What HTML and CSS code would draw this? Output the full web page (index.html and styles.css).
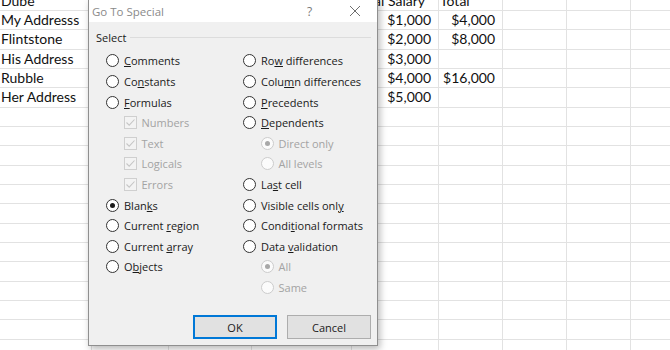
FILE: index.html
```html
<!DOCTYPE html>
<html>
<head>
<meta charset="utf-8">
<link rel="stylesheet" href="styles.css">
</head>
<body>
<div class="sheet">
  <div class="c t">Dube</div><div class="c"></div><div class="c"></div><div class="c"></div><div class="c n hd">Annual Salary</div><div class="c t">Total</div><div class="c"></div><div class="c"></div><div class="c"></div><div class="c"></div>
  <div class="c t">My Addresss</div><div class="c"></div><div class="c"></div><div class="c"></div><div class="c n">$1,000</div><div class="c n">$4,000</div><div class="c"></div><div class="c"></div><div class="c"></div><div class="c"></div>
  <div class="c t">Flintstone</div><div class="c"></div><div class="c"></div><div class="c"></div><div class="c n">$2,000</div><div class="c n">$8,000</div><div class="c"></div><div class="c"></div><div class="c"></div><div class="c"></div>
  <div class="c t">His Address</div><div class="c"></div><div class="c"></div><div class="c"></div><div class="c n">$3,000</div><div class="c n"></div><div class="c"></div><div class="c"></div><div class="c"></div><div class="c"></div>
  <div class="c t">Rubble</div><div class="c"></div><div class="c"></div><div class="c"></div><div class="c n">$4,000</div><div class="c n">$16,000</div><div class="c"></div><div class="c"></div><div class="c"></div><div class="c"></div>
  <div class="c t">Her Address</div><div class="c"></div><div class="c"></div><div class="c"></div><div class="c n">$5,000</div><div class="c n"></div><div class="c"></div><div class="c"></div><div class="c"></div><div class="c"></div>
  <div class="c"></div><div class="c"></div><div class="c"></div><div class="c"></div><div class="c"></div><div class="c"></div><div class="c"></div><div class="c"></div><div class="c"></div><div class="c"></div>
  <div class="c"></div><div class="c"></div><div class="c"></div><div class="c"></div><div class="c"></div><div class="c"></div><div class="c"></div><div class="c"></div><div class="c"></div><div class="c"></div>
  <div class="c"></div><div class="c"></div><div class="c"></div><div class="c"></div><div class="c"></div><div class="c"></div><div class="c"></div><div class="c"></div><div class="c"></div><div class="c"></div>
  <div class="c"></div><div class="c"></div><div class="c"></div><div class="c"></div><div class="c"></div><div class="c"></div><div class="c"></div><div class="c"></div><div class="c"></div><div class="c"></div>
  <div class="c"></div><div class="c"></div><div class="c"></div><div class="c"></div><div class="c"></div><div class="c"></div><div class="c"></div><div class="c"></div><div class="c"></div><div class="c"></div>
  <div class="c"></div><div class="c"></div><div class="c"></div><div class="c"></div><div class="c"></div><div class="c"></div><div class="c"></div><div class="c"></div><div class="c"></div><div class="c"></div>
  <div class="c"></div><div class="c"></div><div class="c"></div><div class="c"></div><div class="c"></div><div class="c"></div><div class="c"></div><div class="c"></div><div class="c"></div><div class="c"></div>
  <div class="c"></div><div class="c"></div><div class="c"></div><div class="c"></div><div class="c"></div><div class="c"></div><div class="c"></div><div class="c"></div><div class="c"></div><div class="c"></div>
  <div class="c"></div><div class="c"></div><div class="c"></div><div class="c"></div><div class="c"></div><div class="c"></div><div class="c"></div><div class="c"></div><div class="c"></div><div class="c"></div>
  <div class="c"></div><div class="c"></div><div class="c"></div><div class="c"></div><div class="c"></div><div class="c"></div><div class="c"></div><div class="c"></div><div class="c"></div><div class="c"></div>
  <div class="c"></div><div class="c"></div><div class="c"></div><div class="c"></div><div class="c"></div><div class="c"></div><div class="c"></div><div class="c"></div><div class="c"></div><div class="c"></div>
  <div class="c"></div><div class="c"></div><div class="c"></div><div class="c"></div><div class="c"></div><div class="c"></div><div class="c"></div><div class="c"></div><div class="c"></div><div class="c"></div>
  <div class="c"></div><div class="c"></div><div class="c"></div><div class="c"></div><div class="c"></div><div class="c"></div><div class="c"></div><div class="c"></div><div class="c"></div><div class="c"></div>
</div>

<div class="dialog">
  <div class="titlebar">
    <span class="title">Go To Special</span>
    <span class="help">?</span>
    <span class="close"><svg width="12" height="12" viewBox="0 0 12 12"><path d="M1 1 L11 11 M11 1 L1 11" stroke="#6e6e6e" stroke-width="1" fill="none"/></svg></span>
  </div>
  <div class="dlg-body">
    <div class="group">
      <div class="group-head"><span class="legend">Select</span><span class="rule"></span></div>
      <div class="cols">
        <div class="col left">
          <div class="opt"><span class="radio"></span><span><u>C</u>omments</span></div>
          <div class="opt"><span class="radio"></span><span>Co<u>n</u>stants</span></div>
          <div class="opt"><span class="radio"></span><span><u>F</u>ormulas</span></div>
          <div class="opt sub dis"><span class="check"><svg width="13" height="13" viewBox="0 0 13 13"><path d="M2.5 6.5 L5.2 9.2 L10.5 3.5" stroke="#c6c6c6" stroke-width="1.1" fill="none"/></svg></span><span>Numbers</span></div>
          <div class="opt sub dis"><span class="check"><svg width="13" height="13" viewBox="0 0 13 13"><path d="M2.5 6.5 L5.2 9.2 L10.5 3.5" stroke="#c6c6c6" stroke-width="1.1" fill="none"/></svg></span><span>Text</span></div>
          <div class="opt sub dis"><span class="check"><svg width="13" height="13" viewBox="0 0 13 13"><path d="M2.5 6.5 L5.2 9.2 L10.5 3.5" stroke="#c6c6c6" stroke-width="1.1" fill="none"/></svg></span><span>Logicals</span></div>
          <div class="opt sub dis"><span class="check"><svg width="13" height="13" viewBox="0 0 13 13"><path d="M2.5 6.5 L5.2 9.2 L10.5 3.5" stroke="#c6c6c6" stroke-width="1.1" fill="none"/></svg></span><span>Errors</span></div>
          <div class="opt on"><span class="radio"></span><span>Blan<u>k</u>s</span></div>
          <div class="opt"><span class="radio"></span><span>Current <u>r</u>egion</span></div>
          <div class="opt"><span class="radio"></span><span>Current <u>a</u>rray</span></div>
          <div class="opt"><span class="radio"></span><span>O<u>b</u>jects</span></div>
        </div>
        <div class="col right">
          <div class="opt"><span class="radio"></span><span>Ro<u>w</u> differences</span></div>
          <div class="opt"><span class="radio"></span><span>Colu<u>m</u>n differences</span></div>
          <div class="opt"><span class="radio"></span><span><u>P</u>recedents</span></div>
          <div class="opt"><span class="radio"></span><span><u>D</u>ependents</span></div>
          <div class="opt sub dis on"><span class="radio"></span><span>Direct only</span></div>
          <div class="opt sub dis"><span class="radio"></span><span>All levels</span></div>
          <div class="opt"><span class="radio"></span><span>La<u>s</u>t cell</span></div>
          <div class="opt"><span class="radio"></span><span>Visible cells onl<u>y</u></span></div>
          <div class="opt"><span class="radio"></span><span>Condi<u>t</u>ional formats</span></div>
          <div class="opt"><span class="radio"></span><span>Data <u>v</u>alidation</span></div>
          <div class="opt sub dis on"><span class="radio"></span><span>All</span></div>
          <div class="opt sub dis"><span class="radio"></span><span>Same</span></div>
        </div>
      </div>
    </div>
    <div class="buttons">
      <button class="btn default">OK</button>
      <button class="btn">Cancel</button>
    </div>
  </div>
</div>
</body>
</html>
```

FILE: styles.css
```css
html, body {
  margin: 0;
  padding: 0;
  background: #ffffff;
  overflow: hidden;
  width: 670px;
  height: 350px;
}

body {
  position: relative;
  font-family: Lato, "Liberation Sans", sans-serif;
}

.sheet {
  display: grid;
  grid-template-columns: 92px 77px 83px 100px 87px 64px 64px 64px 64px 64px;
  grid-auto-rows: 19.33px;
  margin-top: -8.33px;
  width: 759px;
}

.c {
  box-sizing: border-box;
  border-right: 1px solid #e2e2e2;
  border-bottom: 1px solid #e2e2e2;
  font-size: 14px;
  line-height: 18px;
  color: #111111;
  white-space: nowrap;
  overflow: visible;
  padding: 0 2px;
  min-width: 0;
}

.c.t { text-align: left; padding-left: 1px; }
.c.n { text-align: right; padding-right: 7px; }
.c.hd {
  display: flex;
  justify-content: flex-end;
  padding-right: 13px;
}

/* Dialog */
.dialog {
  position: absolute;
  left: 88px;
  top: -1px;
  width: 290px;
  height: 347px;
  box-sizing: border-box;
  border: 1px solid #8f8f8f;
  background: #f0f0f0;
  box-shadow: 2px 3px 7px rgba(0, 0, 0, 0.28);
  display: flex;
  flex-direction: column;
  font-family: "Open Sans", "Noto Sans", sans-serif;
}

.titlebar {
  height: 22px;
  background: #ffffff;
  display: flex;
  align-items: center;
  flex: none;
}

.title {
  font-size: 11.5px;
  color: #8a8a8a;
  padding-left: 3px;
  flex: 1;
}

.help {
  font-size: 12px;
  color: #7a7a7a;
  width: 12px;
  margin-right: 30px;
}

.close {
  width: 12px;
  height: 12px;
  margin-right: 16px;
  display: flex;
}

.dlg-body {
  flex: 1;
  display: flex;
  flex-direction: column;
  padding: 0 6px 6px 0;
}

.group-head {
  display: flex;
  align-items: center;
  margin-top: 7px;
  height: 17px;
  padding-left: 7px;
}

.legend {
  font-size: 11px;
  color: #1a1a1a;
  margin-right: 4px;
}

.rule {
  flex: 1;
  height: 1px;
  background: #dcdcdc;
}

.cols {
  display: flex;
  padding-left: 17px;
  margin-top: 4.7px;
}

.col.left { width: 137px; }
.col.right { flex: 1; }

.opt {
  height: 20.6px;
  display: flex;
  align-items: center;
  font-size: 11px;
  color: #1a1a1a;
  white-space: nowrap;
}

.opt.sub { padding-left: 17.5px; }
.opt.dis { color: #a3a3a3; }

.radio {
  width: 13px;
  height: 13px;
  box-sizing: border-box;
  border: 1px solid #333333;
  border-radius: 50%;
  background: #ffffff;
  margin-right: 5px;
  flex: none;
  display: flex;
  align-items: center;
  justify-content: center;
}

.opt.on .radio::after {
  content: "";
  width: 5px;
  height: 5px;
  border-radius: 50%;
  background: #1a1a1a;
}

.opt.dis .radio {
  border-color: #cccccc;
  background: #fbfbfb;
}

.opt.dis.on .radio::after {
  background: #a8a8a8;
}

.check {
  width: 13px;
  height: 13px;
  box-sizing: border-box;
  border: 1px solid #cfcfcf;
  background: #f3f3f3;
  margin-right: 5px;
  flex: none;
  display: flex;
}

.check svg {
  margin: -1px;
}

.buttons {
  margin-top: auto;
  display: flex;
  justify-content: flex-end;
  gap: 10px;
}

.btn {
  width: 84px;
  height: 24px;
  box-sizing: border-box;
  background: #e1e1e1;
  border: 1px solid #adadad;
  font-family: "Open Sans", "Noto Sans", sans-serif;
  font-size: 11px;
  color: #1a1a1a;
  padding: 0;
}

.btn.default {
  border: 2px solid #0078d7;
}
```
